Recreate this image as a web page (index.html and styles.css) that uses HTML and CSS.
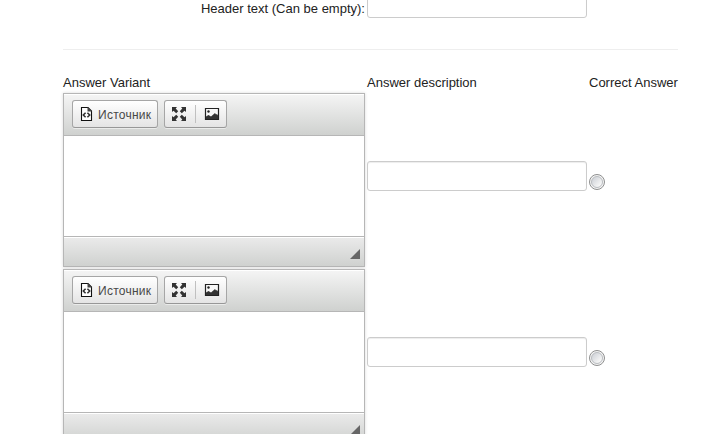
FILE: index.html
```html
<!DOCTYPE html>
<html lang="en">
<head>
<meta charset="utf-8">
<title>Answers</title>
<link rel="stylesheet" href="styles.css">
</head>
<body>
<svg width="0" height="0" class="defs">
  <symbol id="source" viewBox="0 0 16 16"><path d="M3.500 1.500h6.500l3.500 3.500v9.500h-10z" fill="#fff" stroke="#111" stroke-width="1.100"/><path d="M9.500 1v4.500H14z" fill="#444"/><path d="M7.600 6.700 5.300 9l2.300 2.300M9.400 6.700 11.700 9l-2.300 2.300" fill="none" stroke="#333" stroke-width="1.600"/></symbol>
  <symbol id="maximize" viewBox="0 0 16 16"><path d="M1 1h5L4.700 2.500 7.200 5.200 5.200 7.200 2.500 4.700 1 6zM15 1v5l-1.500-1.300-2.700 2.500-2-2 2.500-2.700L10 1zM1 15v-5l1.500 1.300 2.700-2.500 2 2-2.500 2.700L6 15zM15 15h-5l1.300-1.500-2.500-2.700 2-2 2.700 2.500L15 10z" fill="#333"/></symbol>
  <symbol id="image" viewBox="0 0 16 16"><path d="M1.500 2.500h13v11h-13z" fill="#f8f8f8" stroke="#222" stroke-width="1.200"/><path d="M2 13v-2.500l2.500-1.500L7 10.500l4-3.500 1 1.500 1-.5 1 1.500V13z" fill="#333"/><circle cx="4.500" cy="5.500" r="1.200" fill="#222"/></symbol>
</svg>
<main class="form">
  <div class="header-field"><label for="header">Header text (Can be empty):</label><input id="header" class="text-input" type="text"></div>
  <hr class="divider">
  <div class="answers">
    <div class="heading">Answer Variant</div>
    <div class="heading">Answer description</div>
    <div class="heading">Correct Answer</div>

    <div class="editor">
      <div class="toolbar">
        <div class="group source"><svg class="icon"><use href="#source"/></svg><span>Источник</span></div>
        <div class="group tools"><svg class="icon"><use href="#maximize"/></svg><i class="separator"></i><svg class="icon"><use href="#image"/></svg></div>
      </div>
      <div class="content"></div>
      <div class="footer"><i class="resizer"></i></div>
    </div>
    <input class="text-input description" type="text">
    <input class="radio" type="radio" name="correct">

    <div class="editor">
      <div class="toolbar">
        <div class="group source"><svg class="icon"><use href="#source"/></svg><span>Источник</span></div>
        <div class="group tools"><svg class="icon"><use href="#maximize"/></svg><i class="separator"></i><svg class="icon"><use href="#image"/></svg></div>
      </div>
      <div class="content"></div>
      <div class="footer"><i class="resizer"></i></div>
    </div>
    <input class="text-input description" type="text">
    <input class="radio" type="radio" name="correct">
  </div>
</main>
</body>
</html>
```
FILE: styles.css
```css
* { box-sizing: border-box; }
html, body { height: 100%; overflow: hidden; }
body { margin: 0; background: #fff; color: #222; font: 13px/20px "Liberation Sans", Arial, sans-serif; }
.defs { display: none; }
.form { width: 616px; margin-left: 63px; }
.header-field { display: flex; justify-content: flex-end; width: 524px; height: 18px; align-items: flex-end; gap: 2px; }
.header-field label { white-space: nowrap; line-height: 18px; }
.text-input { display: block; width: 220px; height: 30px; margin: 0; padding: 4px 6px; border: 1px solid #ccc; border-radius: 3px; background: #fff; box-shadow: inset 0 1px 1px rgba(0,0,0,.075); }
.divider { height: 1px; margin: 31px 1px 23px 0; border: 0; background: #eee; }
.answers { display: grid; grid-template-columns: 302px 220px 90px; grid-template-rows: 18px 174px 174px; column-gap: 2px; row-gap: 2px; align-items: center; }
.heading { white-space: nowrap; padding-top: 2px; }
.editor { height: 174px; border: 1px solid #b6b6b6; background: #fff; box-shadow: 0 0 3px rgba(0,0,0,.15); }
.toolbar { display: flex; gap: 6px; height: 42px; padding: 6px 8px; border-bottom: 1px solid #b6b6b6; background: linear-gradient(#f5f5f5, #cfd1cf); box-shadow: inset 0 1px #fff; }
.group { display: flex; align-items: center; height: 28px; border: 1px solid #a6a6a6; border-bottom-color: #979797; border-radius: 3px; background: linear-gradient(#fff, #e4e4e4); box-shadow: 0 1px 0 rgba(255,255,255,.5); }
.source { width: 86px; padding-left: 5px; gap: 4px; color: #484848; font: 12px/18px "Liberation Sans", Arial, sans-serif; letter-spacing: .25px; }
.source span { padding-top: 2px; }
.tools { width: 63px; padding: 0 6px; justify-content: space-between; }
.icon { width: 16px; height: 16px; flex: none; }
.separator { width: 1px; height: 18px; background: #c0c0c0; }
.content { height: 100px; }
.footer { display: flex; align-items: flex-end; justify-content: flex-end; height: 30px; padding: 0 4px 7px; border-top: 1px solid #b6b6b6; background: linear-gradient(#ebebeb, #cfd1cf); box-shadow: inset 0 1px #fff; }
.resizer { width: 10px; height: 10px; background: #666; clip-path: polygon(100% 0, 100% 100%, 0 100%); }
.description { margin-bottom: 8px; }
.radio { appearance: none; display: grid; place-items: center; width: 16px; height: 16px; margin: 4px 0 0; border: 1px solid #8e8f8f; border-radius: 50%; background: #f4f4f4; }
.radio::before { content: ""; width: 10px; height: 10px; border: 1px solid #b9bcc0; border-radius: 50%; background: linear-gradient(135deg, #cbcfd5, #f6f6f6 80%); }
```
